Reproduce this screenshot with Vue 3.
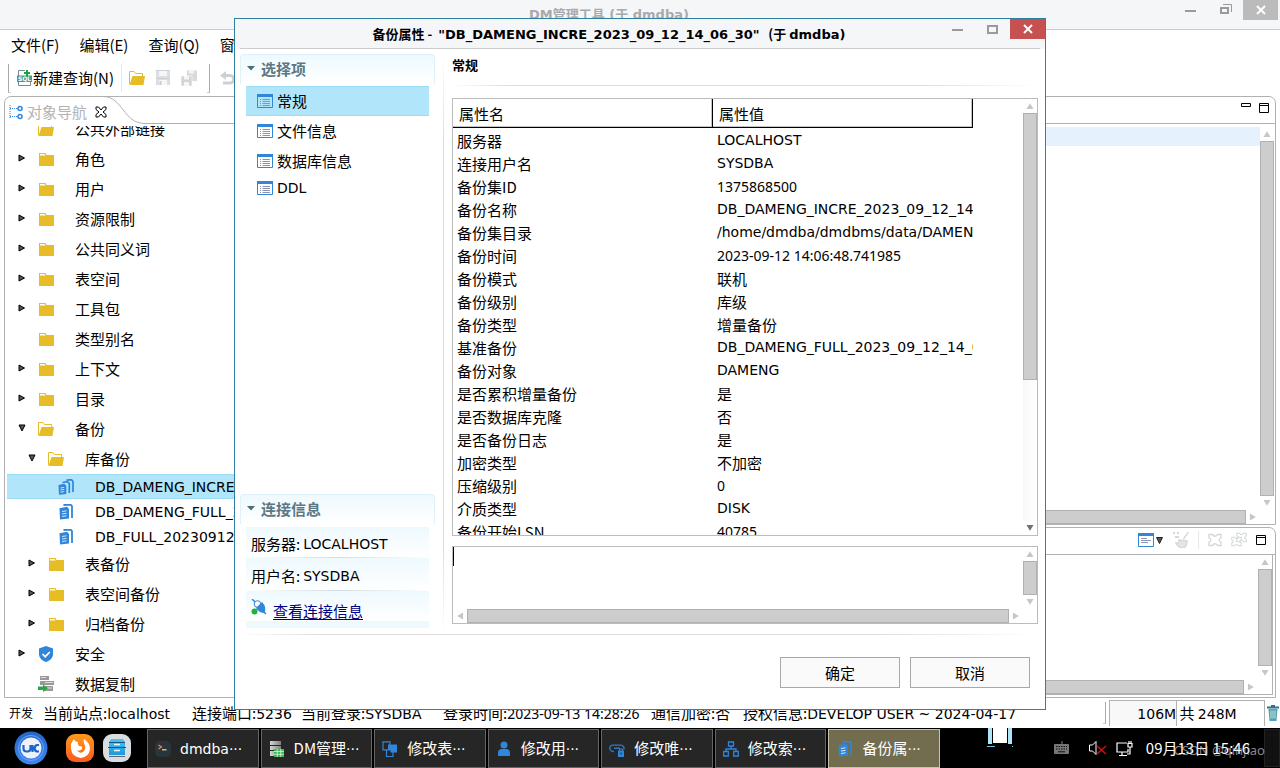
<script setup>
import { ref } from 'vue'

const menus = ['文件(F)', '编辑(E)', '查询(Q)', '窗口(W)']

const tree = [
  { label: '公共外部链接', icon: 'open', level: 0 },
  { label: '角色', icon: 'folder', level: 0, arrow: 'right' },
  { label: '用户', icon: 'folder', level: 0, arrow: 'right' },
  { label: '资源限制', icon: 'folder', level: 0, arrow: 'right' },
  { label: '公共同义词', icon: 'folder', level: 0, arrow: 'right' },
  { label: '表空间', icon: 'folder', level: 0, arrow: 'right' },
  { label: '工具包', icon: 'folder', level: 0, arrow: 'right' },
  { label: '类型别名', icon: 'folder', level: 0 },
  { label: '上下文', icon: 'folder', level: 0, arrow: 'right' },
  { label: '目录', icon: 'folder', level: 0, arrow: 'right' },
  { label: '备份', icon: 'open', level: 0, arrow: 'down' },
  { label: '库备份', icon: 'open', level: 1, arrow: 'down' },
  { label: 'DB_DAMENG_INCRE_2023_09_12_14_06_30', icon: 'incr', level: 2, selected: true },
  { label: 'DB_DAMENG_FULL_2023_09_12_14_02_11', icon: 'docs', level: 2 },
  { label: 'DB_FULL_20230912_140211', icon: 'docs', level: 2 },
  { label: '表备份', icon: 'folder', level: 1, arrow: 'right' },
  { label: '表空间备份', icon: 'folder', level: 1, arrow: 'right' },
  { label: '归档备份', icon: 'folder', level: 1, arrow: 'right' },
  { label: '安全', icon: 'shield', level: 0, arrow: 'right' },
  { label: '数据复制', icon: 'repl', level: 0 }
]

const sections = ['常规', '文件信息', '数据库信息', 'DDL']
const current = ref('常规')

const rows = [
  ['服务器', 'LOCALHOST', 'latin'],
  ['连接用户名', 'SYSDBA', 'latin'],
  ['备份集ID', '1375868500', 'num'],
  ['备份名称', 'DB_DAMENG_INCRE_2023_09_12_14_06_30', 'latin'],
  ['备份集目录', '/home/dmdba/dmdbms/data/DAMENG/bak', 'latin'],
  ['备份时间', '2023-09-12 14:06:48.741985', 'num'],
  ['备份模式', '联机'],
  ['备份级别', '库级'],
  ['备份类型', '增量备份'],
  ['基准备份', 'DB_DAMENG_FULL_2023_09_12_14_02_11', 'latin'],
  ['备份对象', 'DAMENG', 'latin'],
  ['是否累积增量备份', '是'],
  ['是否数据库克隆', '否'],
  ['是否备份日志', '是'],
  ['加密类型', '不加密'],
  ['压缩级别', '0', 'num'],
  ['介质类型', 'DISK', 'latin'],
  ['备份开始LSN', '40785', 'num']
]

const tasks = [
  { label: 'dmdba', icon: 'term', latin: true },
  { label: 'DM管理', icon: 'dm' },
  { label: '修改表', icon: 'tables' },
  { label: '修改用', icon: 'user' },
  { label: '修改唯', icon: 'link' },
  { label: '修改索', icon: 'index' },
  { label: '备份属', icon: 'docs', active: true }
]
</script>

<template>
  <div class="desktop">
    <svg class="sprite" aria-hidden="true">
      <defs>
        <linearGradient id="ff" x1="0" y1="0" x2="0" y2="1">
          <stop offset="0" stop-color="#ff9a1c" /><stop offset="1" stop-color="#fa5a20" />
        </linearGradient>
        <linearGradient id="uk" x1="0" y1="0" x2="0" y2="1">
          <stop offset="0" stop-color="#2467c9" /><stop offset="1" stop-color="#3f87f0" />
        </linearGradient>
        <linearGradient id="cab" x1="0" y1="0" x2="0" y2="1">
          <stop offset="0" stop-color="#4bc3f2" /><stop offset="1" stop-color="#1e97dc" />
        </linearGradient>
        <linearGradient id="srv" x1="0" y1="0" x2="1" y2="0">
          <stop offset="0" stop-color="#d5d5d5" /><stop offset="1" stop-color="#808080" />
        </linearGradient>
      </defs>
      <symbol id="i-folder" viewBox="0 0 16 16"><path d="M1 2h6.500l1 2H16v11H1z" fill="#e6bd26" /><path d="M2 3h4.500l1 1.500H2z" fill="#fff" /></symbol>
      <symbol id="i-open" viewBox="0 0 16 16"><path d="M.5 14V1.500h4.500l1.500 2h7V6" fill="none" stroke="#e6bd26" /><path d="M3.500 6H16l-1.500 9H.500z" fill="#e6bd26" /></symbol>
      <symbol id="i-docs" viewBox="0 0 16 16"><path d="M1.500 4.200 9 2.800 11 5v9.500l-9 1z" fill="#2f86da" /><path d="M5.500 1 12.500 .5 14 2v12" fill="none" stroke="#2f86da" stroke-width="1.800" /><path d="M4 7.500l4.500-.7M4 10l4.500-.7M4 12.500l4.500-.7" stroke="#fff" stroke-width=".8" /></symbol>
      <symbol id="i-incr" viewBox="0 0 16 16"><path d="M.5 6 6.500 4.800 8.300 7v8l-7.300.8z" fill="#2f86da" /><path d="M4.500 3.500 9.500 2.700 11.300 4.500V14M8.500 1.200 13.500 .7 15 2.500V13" fill="none" stroke="#2f86da" stroke-width="1.700" /><path d="M2.500 9l3.700-.6M2.500 11l3.700-.6M2.500 13.200l3.700-.6" stroke="#fff" stroke-width=".8" /></symbol>
      <symbol id="i-shield" viewBox="0 0 16 16"><path d="M8 0l7 2.500V8c0 4-3 6.700-7 8-4-1.300-7-4-7-8V2.500z" fill="#2f86da" /><path d="M4.500 8l2.700 2.700L11.800 6" fill="none" stroke="#fff" stroke-width="1.700" /></symbol>
      <symbol id="i-repl" viewBox="0 0 16 16"><path d="M2 0h9v4H2zM2 5h14v4H2zM6 10h9v5H6z" fill="#999" /><path d="M3 1.500h5M7 6.500h8M9 12h5" stroke="#ddd" /><path d="M0 10.500h5V8.500l5 3.700-5 3.800v-2H0z" fill="#28a745" /></symbol>
      <symbol id="i-list" viewBox="0 0 16 14"><path d="M.5 1h15v12.500H.5z" fill="none" stroke="#2f86da" /><path d="M0 0h16v3H0z" fill="#2f86da" /><path d="M3 5.500h1M3 7.500h1M3 9.500h1M3 11.500h1M5.500 5.500H13M5.500 7.500H13M5.500 9.500H13M5.500 11.500H13" stroke="#8a93b3" /></symbol>
      <symbol id="i-save" viewBox="0 0 16 16"><path d="M1 1h14v14H1z" fill="#dcdfe1" /><path d="M4 1h8v5H4zM4 10h8v5H4z" fill="#f5f6f7" /><path d="M5.500 11v4" stroke="#c8cccf" stroke-width="2" /><path d="M1 .5h14M1 8.500h14" stroke="#ccd0d3" /></symbol>
      <symbol id="i-term" viewBox="0 0 16 16"><rect width="16" height="16" rx="5" fill="#28353c" /><path d="M3.500 4l3 2-3 2" fill="none" stroke="#f08a45" stroke-width="1.200" /><path d="M7 8.800h4.500" stroke="#e7e08a" stroke-width="1.200" /></symbol>
      <symbol id="i-dm" viewBox="0 0 16 16"><path d="M1 0h11v4H1zM1 5h11v4H1zM1 10h5v5H1z" fill="url(#srv)" /><path d="M5 8h10v8H5z" fill="#3fb954" /><path d="M5 10.500h10M5 13.300h10M8.300 8v8M11.700 8v8" stroke="#d6f5dc" stroke-width=".8" /></symbol>
      <symbol id="i-tables" viewBox="0 0 16 16"><path d="M1 .8h7v8H1zM4.500 9v6.500H11V9" fill="none" stroke="#2f86da" stroke-width="1.200" /><path d="M6 3.500h9v8H8.500V9H6z" fill="#2f86da" /></symbol>
      <symbol id="i-user" viewBox="0 0 16 16"><circle cx="8" cy="4" r="3.500" fill="#2f86da" /><path d="M2 15v-3q0-4 4-4h4q4 0 4 4v3z" fill="#2f86da" /></symbol>
      <symbol id="i-link" viewBox="0 0 16 16"><path d="M5 10.500H4a3.200 3.200 0 0 1 0-6.400h8a3.200 3.200 0 0 1 2.700 4.500M5 7.300h6" fill="none" stroke="#2f78bd" stroke-width="1.400" /><path d="M9 9.500h6V16H9z" fill="#2f86da" /><path d="M10.500 9.500V8h3v1.500" fill="none" stroke="#2f86da" /><path d="M12 11.500v2" stroke="#222" /></symbol>
      <symbol id="i-index" viewBox="0 0 16 16"><path d="M5.500 1h5v4h-5zM.7 10.500h4.600V15H.7zM10.700 10.500h4.600V15h-4.600zM8 5v3M3 10.500V8h10v2.500" fill="none" stroke="#2f86da" stroke-width="1.300" /></symbol>
      <symbol id="i-x" viewBox="0 0 12 12"><path d="M1 1h2.500L6 4l2.500-3H11v2.500L8 6l3 2.500V11H8.500L6 8l-2.500 3H1V8.500L4 6 1 3.500z" fill="none" stroke="currentColor" /></symbol>
      <symbol id="i-clover" viewBox="0 0 14 14"><path d="M1 1.500h3.500Q7 5 9.500 1.500H13V5Q9 7 13 9v3.500H9.500Q7 9 4.500 12.500H1V9Q5 7 1 5z" fill="none" stroke="currentColor" stroke-width="1.300" /></symbol>
    </svg>

    <header class="titlebar">
      <h1>DM管理工具 (于 dmdba)</h1>
      <div class="winbtns">
        <button aria-label="最小化"><svg width="12" height="12"><path d="M0 6h11v2H0z" fill="#9a9a9e" /></svg></button>
        <button aria-label="还原"><svg width="12" height="12"><path d="M1 4h7v5H1z" fill="none" stroke="#9a9a9e" stroke-width="2" /><path d="M3 .5h8.500V8" fill="none" stroke="#9a9a9e" /></svg></button>
        <button class="close" aria-label="关闭"><svg width="10" height="10"><path d="M1 1l8 8M9 1L1 9" stroke="#fff" stroke-width="2" /></svg></button>
      </div>
    </header>

    <nav class="menubar"><button v-for="m in menus" :key="m">{{ m }}</button></nav>

    <div class="toolbar">
      <i class="grip"></i>
      <button class="newq">
        <svg width="15" height="16" viewBox="0 0 15 16"><path d="M1.500 6V.5H8M1.500 12v3.500h12V12" fill="none" stroke="#7a869a" /><path d="M0 5.500h15V12H0z" fill="#4a9c86" /><text x="7.500" y="11" text-anchor="middle" class="sql">SQL</text><path d="M7 3h6M10 0v6" stroke="#18a832" stroke-width="2" /></svg>新建查询(N)
      </button>
      <i class="thin"></i>
      <button aria-label="打开"><svg width="16" height="16"><use href="#i-open" /></svg></button>
      <button aria-label="保存"><svg width="16" height="16"><use href="#i-save" /></svg></button>
      <button aria-label="全部保存"><svg width="16" height="16"><path d="M6 .5h10V11H6z" fill="#d8dbdd" /><path d="M8 .5h5v3H8z" fill="#f5f6f7" /><path d="M0 6h11v10H0z" fill="#d2d5d8" stroke="#fff" stroke-width=".6" /><path d="M3 6h5v3.500H3zM3 12h5v4H3z" fill="#f5f6f7" /></svg></button>
      <i class="grip end"></i>
      <button aria-label="撤销"><svg width="16" height="16"><path d="M3 5.500h7a3.700 3.700 0 0 1 0 7.500H3" fill="none" stroke="#cdd1d4" stroke-width="3" /><path d="M0 5.500L6 1v9z" fill="#cdd1d4" /></svg></button>
    </div>

    <main class="work">
      <section class="nav">
        <div class="navtab">
          <div class="tabtext">
            <svg width="14" height="16"><path d="M1 1v13M1 4.500h8M1 12.500h8" stroke="#2f86da" stroke-dasharray="1 1" /><circle cx="11" cy="4.500" r="2" fill="none" stroke="#2f86da" stroke-width="1.500" /><circle cx="11" cy="12.500" r="2" fill="none" stroke="#2f86da" stroke-width="1.500" /></svg>
            <span>对象导航</span>
            <button aria-label="关闭视图"><svg width="12" height="12"><use href="#i-x" /></svg></button>
          </div>
          <svg class="curve" width="42" height="28"><path d="M0 .5C20 .5 20 27.500 42 27.500" fill="none" stroke="#b1b1b1" /></svg>
          <i class="rest"></i>
        </div>
        <div class="treewrap">
          <ul class="tree">
            <li v-for="n in tree" :key="n.label" :class="['l' + n.level, { sel: n.selected }]">
              <span class="arr"><svg v-if="n.arrow" width="8" height="8"><path :d="n.arrow === 'right' ? 'M1 1v6l5.500-3z' : 'M1 1h6L4 7z'" fill="#555" stroke="#000" /></svg></span>
              <svg width="16" height="16"><use :href="'#i-' + n.icon" /></svg>
              <span class="name">{{ n.label }}</span>
            </li>
          </ul>
        </div>
      </section>

      <div class="editors">
        <section class="pane top">
          <div class="panehead">
            <svg width="10" height="12"><path d="M.5 1.500h9v3h-9z" fill="none" stroke="#000" /></svg>
            <svg width="10" height="12"><path d="M.5 1.500h9v9h-9zM0 3.500h10" fill="none" stroke="#000" /></svg>
          </div>
          <div class="scrollgrid">
            <div class="editor"><div class="line"></div></div>
            <div class="sb v"><i class="a up"></i><b class="grow"></b><i class="a down"></i></div>
            <div class="sb h"><i class="a hidden"></i><b class="grow"></b><i class="a rt"></i></div>
          </div>
        </section>
        <section class="pane bottom">
          <div class="panehead tools">
            <svg width="26" height="14"><path d="M.5 1h15v12.500H.5z" fill="none" stroke="#2f86da" /><path d="M0 0h16v3H0z" fill="#2f86da" /><path d="M3 5.500h6M3 7.500h10M3 9.500h7" stroke="#8a93b3" /><path d="M18.500 4.500h6l-3 6z" fill="#555" stroke="#222" /></svg>
            <svg width="16" height="16"><path d="M15.500 0l-5 7M6 8l8 1q0 5-3 7-6 0-8-5 3 1 3-3z" stroke="#d5d8da" fill="#e3e5e6" stroke-width="1.500" /><path d="M0 1h2M4 1h2M2 5h4" stroke="#d5d8da" stroke-width="2" /></svg>
            <i class="thin"></i>
            <svg class="pale" width="14" height="14"><use href="#i-clover" /></svg>
            <svg class="pale" width="16" height="16"><use href="#i-clover" x="5" width="11" height="11" /><use href="#i-clover" y="4" width="11" height="11" /></svg>
            <svg width="10" height="12"><path d="M.5 1.500h9v9h-9zM0 3.500h10" fill="none" stroke="#000" /></svg>
          </div>
          <div class="scrollgrid framed">
            <div></div>
            <div class="sb v"><i class="a up"></i><b class="grow"></b><i class="a down"></i></div>
            <div class="sb h"><i class="a hidden"></i><b class="grow"></b><i class="a rt"></i></div>
          </div>
        </section>
      </div>
    </main>

    <footer class="status">
      <div class="info">
        <small>开发</small>
        <span>当前站点:<em>localhost</em></span>
        <span>连接端口:<em>5236</em></span>
        <span>当前登录:<em>SYSDBA</em></span>
        <span>登录时间:<span class="num">2023-09-13 14:28:26</span></span>
        <span>通信加密:否</span>
        <span>授权信息:<em>DEVELOP USER ~ 2024-04-17</em></span>
      </div>
      <i class="grip end"></i>
      <div class="heap"><span><em>106M</em> 共 <em>248M</em></span></div>
      <button class="trash" aria-label="回收"><svg width="12" height="16"><path d="M1.500 4h9l-1 12h-7z" fill="#4f9fc0" /><path d="M0 2.500h12M4 1h4" stroke="#2a7296" stroke-width="2" /><path d="M4 5.500v8M6 5.500v8M8 5.500v8" stroke="#c8e8b8" /></svg></button>
    </footer>

    <div class="taskbar">
      <button class="launch" aria-label="开始菜单">
        <svg width="34" height="34"><circle cx="17" cy="17" r="16.500" fill="url(#uk)" /><circle cx="17" cy="17" r="12.500" fill="none" stroke="#68a5ff" /><circle cx="17" cy="17" r="10.500" fill="#eef2f8" /><path d="M9.500 14v3.500q0 3 3 3h1q3 0 3-3V14M18.500 14v7M25 14h-1.500q-2.500 0-3 3.500.5 3 3 3H25" fill="none" stroke="#1d65c8" stroke-width="2.200" /></svg>
      </button>
      <button class="launch" aria-label="Firefox">
        <svg width="28" height="28"><rect width="28" height="28" rx="9" fill="url(#ff)" /><path d="M5 10q2-4 3-5 1 3 4 3-1 2 1 4 4 0 3 3-3 3-5 1 2 4 6 2 4-3 1-9-1-2 0-4 6 4 6 10-1 8-9 9-9-1-10-9z" fill="#fff" /></svg>
      </button>
      <button class="launch" aria-label="文件管理器">
        <svg width="28" height="28"><rect width="28" height="28" rx="9" fill="#d8dde2" /><path d="M8 5h12l2 3v13H6V8z" fill="url(#cab)" /><path d="M6 8.500h16M5 13.500h18" stroke="#14587f" /><path d="M11 10.500h6M11 16.500h6" stroke="#e4f7ff" stroke-width="1.500" /><path d="M6 22.500h16" stroke="#56697a" /></svg>
      </button>
      <div class="tasks">
        <button v-for="t in tasks" :key="t.label" :class="{ active: t.active, latin: t.latin }">
          <svg width="16" height="16"><use :href="'#i-' + t.icon" /></svg><span>{{ t.label }}<span class="dots">···</span></span>
        </button>
      </div>
      <svg class="pager" width="26" height="20"><path d="M1 0h4v16H1zM21 0h4v16h-4z" fill="#aee4f8" /><path d="M6 0h14v15H6z" fill="#fff" /><path d="M0 18.500h8M25 18.500h1" stroke="#63c4e8" /></svg>
      <div class="tray">
        <svg width="16" height="14"><path d="M8 0v3" stroke="#888" /><rect y="3" width="15" height="10" rx="1" fill="#777" /><path d="M2 5.500h11M2 8h11" stroke="#111" stroke-dasharray="1.500 1" /><path d="M4 10.800h7" stroke="#111" /></svg>
        <svg width="18" height="16"><path d="M.5 5h3L7 1.500v13L3.500 11h-3z" fill="none" stroke="#fff" /><path d="M8 6l9 8M17 6l-9 8" stroke="#d01010" stroke-width="1.500" /></svg>
        <svg width="18" height="16"><path d="M11 3H1v9h11V9M6 12v3M3 15.500h8M12 3.500h4v3.500h-4zM13 3.500V1M15 3.500V1M14 7v7h-3" fill="none" stroke="#fff" stroke-width="1.200" /></svg>
        <time>09月13日 15:46<span class="mark">CSDN @qinjiao</span></time>
      </div>
      <button class="showdesk" aria-label="显示桌面"></button>
    </div>

    <div class="dialog" role="dialog" aria-labelledby="dlg-title">
      <header class="dtitle">
        <h2 id="dlg-title">备份属性 -&nbsp; <em>"DB_DAMENG_INCRE_2023_09_12_14_06_30"</em>&nbsp;&nbsp; (于 <em>dmdba)</em></h2>
        <div class="winbtns">
          <button aria-label="最小化"><svg width="12" height="12"><path d="M0 6h11v2H0z" fill="#9a9a9e" /></svg></button>
          <button aria-label="最大化"><svg width="12" height="12"><path d="M1 3h9v7H1z" fill="none" stroke="#9a9a9e" stroke-width="2" /></svg></button>
          <button class="close red" aria-label="关闭"><svg width="10" height="10"><path d="M1 1l8 8M9 1L1 9" stroke="#fff" stroke-width="2" /></svg></button>
        </div>
      </header>
      <div class="dbody">
        <aside>
          <h3><svg width="8" height="5"><path d="M0 0h8L4 4.500z" fill="#4d6c7a" /></svg>选择项</h3>
          <ul class="opts">
            <li v-for="s in sections" :key="s">
              <button :class="{ on: s === current, latin: s === 'DDL' }" @click="current = s"><svg width="16" height="14"><use href="#i-list" /></svg>{{ s }}</button>
            </li>
          </ul>
          <h3 class="second"><svg width="8" height="5"><path d="M0 0h8L4 4.500z" fill="#4d6c7a" /></svg>连接信息</h3>
          <div class="conn">
            <p>服务器: <em>LOCALHOST</em></p>
            <p>用户名: <em>SYSDBA</em></p>
            <p class="lnk"><svg width="16" height="16"><path d="M1 0l4 4M11 11l4 4" stroke="#2f86da" stroke-width="1.500" /><circle cx="6.500" cy="5" r="3.300" fill="#fff" stroke="#2f86da" /><path d="M5 9l6-6q5 5 2.500 11Q8 14 5 9z" fill="#2f86da" /><circle cx="3.500" cy="12.500" r="3" fill="#25b03c" /></svg><a href="#">查看连接信息</a></p>
          </div>
        </aside>
        <i class="vline"></i>
        <div class="content">
          <h4>{{ current }}</h4>
          <i class="hline"></i>
          <div class="tablebox">
            <div class="tscroll">
              <table>
                <colgroup><col class="c1" /><col class="c2" /></colgroup>
                <thead><tr><th scope="col">属性名</th><th scope="col">属性值</th></tr></thead>
                <tbody>
                  <tr v-for="r in rows" :key="r[0]"><td>{{ r[0] }}</td><td :class="r[2]">{{ r[1] }}</td></tr>
                </tbody>
              </table>
            </div>
            <div class="sb v"><i class="a up"></i><b class="tall"></b><span class="track"></span><i class="a down dark"></i></div>
          </div>
          <div class="desc">
            <div class="ta"><textarea aria-label="描述" readonly></textarea><i class="caret"></i></div>
            <div class="sb v"><i class="a up"></i><b class="grow"></b><i class="a down"></i></div>
            <div class="sb h"><i class="a left"></i><b class="grow"></b><i class="a rt"></i></div>
          </div>
        </div>
      </div>
      <i class="hline both"></i>
      <div class="actions"><button>确定</button><button>取消</button></div>
    </div>
  </div>
</template>

<style>
body { overflow: hidden; background: #fff; }
</style>

<style scoped>
.desktop { position: relative; height: 100vh; display: flex; flex-direction: column; overflow: hidden; background: #fff; color: #000; font: 15px/22px "Noto Sans CJK SC", sans-serif; }
.desktop *, .desktop *::before { box-sizing: border-box; }
.sprite { position: absolute; width: 0; height: 0; }
button { font: inherit; color: inherit; border: 0; padding: 0; background: none; display: flex; align-items: center; white-space: nowrap; }
svg, i { display: block; flex: none; }
em, .latin { font-style: normal; font-family: "DejaVu Sans", "Noto Sans CJK SC", sans-serif; font-size: 14px; }
.num { font-family: "Noto Sans", "Noto Sans CJK SC", sans-serif; font-size: 14px; }
h1, h2, h3, h4, ul, p { margin: 0; padding: 0; list-style: none; }

.titlebar { position: relative; height: 30px; flex: none; background: #f5f6f8; border-bottom: 1px solid #ccc; }
.titlebar h1 { font: bold 13px/29px "DejaVu Sans", "Noto Sans CJK SC", sans-serif; color: #a9a9ad; text-align: center; padding-right: 62px; }
.winbtns { position: absolute; top: 0; right: 0; display: flex; height: 20px; }
.winbtns button { width: 35px; justify-content: center; }
.winbtns .close { background: #bbb; }
.titlebar .winbtns { right: 2px; }
.winbtns .red { background: #c75050; }

.menubar { height: 30px; flex: none; display: flex; gap: 20px; padding-left: 11px; }
.toolbar { height: 36px; flex: none; display: flex; align-items: center; gap: 10px; padding-left: 8px; }
.toolbar .newq { gap: 1px; margin-left: -4px; }
.sql { font: bold 6px "DejaVu Sans", sans-serif; fill: #fff; }
.grip { width: 3px; height: 29px; border-left: 1px solid #aaa; border-bottom: 1px solid #ccc; }
.grip.end { border-left: 0; border-right: 1px solid #aaa; }
.thin { width: 1px; height: 28px; margin: 0 -3px; background: #e8e8e8; }

.work { flex: 1; min-height: 0; display: flex; gap: 4px; padding: 0 4px; }
.nav { flex: 0 1 320px; border: 1px solid #b1b1b1; border-radius: 7px 7px 0 0; display: flex; flex-direction: column; min-width: 0; }
.navtab { display: flex; height: 27px; margin-top: -1px; flex: none; }
.navtab .tabtext { display: flex; align-items: center; gap: 4px; padding: 4px 0 0 4px; width: 98px; color: #b3b3b3; flex: none; white-space: nowrap; }
.tabtext button { color: #000; margin-left: 4px; }
.rest { flex: 1; border: solid #b1b1b1; border-width: 1px 0; height: 28px; }
.treewrap { flex: 1; min-height: 0; overflow: hidden; margin: 3px 0 0 2px; }
.tree { margin-top: -12px; }
.tree li { height: 30px; display: flex; align-items: center; white-space: nowrap; padding-left: 11px; }
.tree .l1 { padding-left: 21px; }
.tree .l2 { padding-left: 31px; height: 25px; font-family: "DejaVu Sans", sans-serif; font-size: 14px; }
.tree .sel { background: #b0e5fa; border: solid #9adcf5; border-width: 1px 0; }
.arr { width: 20px; height: 10px; flex: none; }
.name { margin-left: 21px; }

.editors { flex: 1; display: flex; flex-direction: column; gap: 2px; min-width: 0; }
.pane { border: 1px solid #b1b1b1; border-radius: 0 7px 0 0; display: flex; flex-direction: column; min-height: 0; }
.top { flex: 0 1 429px; }
.bottom { flex: 1; }
.panehead { height: 27px; flex: none; display: flex; justify-content: flex-end; align-items: flex-start; padding: 5px 6px 0 0; gap: 8px; border-bottom: 1px solid #b1b1b1; }
.tools { align-items: center; padding: 0 9px 3px 0; gap: 9px; }
.tools .thin { margin: 0; height: 18px; }
.pale { color: #d3d6d8; }
.scrollgrid { flex: 1; min-height: 0; display: grid; grid-template-columns: 1fr 14px; grid-template-rows: 1fr 14px; padding: 3px 1px 0 0; }
.framed { border: solid #b1b1b1; border-width: 0 1px 1px 0; margin: 0 2px 2px 0; padding: 0; }
.line { height: 19px; background: #e6f1fe; }
.sb { display: flex; background: #fff; min-width: 0; min-height: 0; }
.v { flex-direction: column; width: 14px; }
.sb b { background: #cdcdcd; border: 1px solid #b1b1b1; }
.grow { flex: 1; }
.a { width: 14px; height: 14px; background: #c6c6c6; }
.hidden { visibility: hidden; }
.up { clip-path: polygon(50% 30%, 75% 72%, 25% 72%); }
.down { clip-path: polygon(25% 28%, 75% 28%, 50% 70%); }
.left { clip-path: polygon(30% 50%, 72% 25%, 72% 75%); }
.rt { clip-path: polygon(28% 25%, 70% 50%, 28% 75%); }
.dark { background: #707070; }

.status { height: 30px; flex: none; display: flex; align-items: center; white-space: nowrap; }
.info { flex: 1; display: grid; grid-template-columns: 34px 149px 109px 142px 208px 92px 1fr; padding-left: 9px; align-items: center; }
.info small { font-size: 12px; }
.status .grip { height: 22px; margin-right: 3px; }
.heap { width: 156px; height: 26px; border: 1px solid #b1b1b1; border-bottom: 0; display: flex; align-items: center; justify-content: center; background: linear-gradient(90deg, #f8f8f8 66px, #b1b1b1 66px, #b1b1b1 67px, #fff 67px); }
.trash { width: 15px; justify-content: center; }

.taskbar { height: 40px; flex: none; background: #000; color: #fff; display: flex; align-items: center; padding-left: 14px; }
.launch { margin-right: 9px; }
.launch:first-child { margin-right: 18px; }
.tasks { flex: 0 1 793px; display: grid; grid-template-columns: repeat(7, 1fr); gap: 2px; margin: 1px 47px 0 7px; height: 39px; }
.tasks button { background: #262626; border: 1px solid #666; gap: 9px; padding-left: 7px; min-width: 0; overflow: hidden; }
.dots { font-family: "DejaVu Sans", sans-serif; font-size: 14px; }
.tasks .active { background: #736d50; border-color: #c9c4a9; padding-left: 8px; }
.pager { align-self: flex-start; }
.tray { flex: 1; display: flex; align-items: center; justify-content: flex-end; white-space: nowrap; gap: 9px; padding-right: 14px; }
.tray svg:first-child { margin-right: 10px; }
.tray time { position: relative; margin-left: 3px; }
.mark { position: absolute; left: 28px; top: 3px; font: 13px/20px "Noto Sans", sans-serif; color: rgba(200, 200, 200, .7); }
.showdesk { width: 16px; height: 38px; background: #111; border: 1px solid #222; }

.dialog { position: absolute; top: 18px; left: calc(50% - 406px); width: 812px; background: #fff; border: 1px solid #2f7f9f; }
.dtitle { position: relative; height: 30px; background: linear-gradient(#ccc, #ccc) 5px 100% / calc(100% - 10px) 1px no-repeat #f5f6f8; }
.dtitle h2 { font-size: 13px; line-height: 30px; text-align: center; padding-right: 62px; white-space: nowrap; }
.dtitle em { font-size: 13px; }
.dbody { display: flex; padding: 5px 7px 0 5px; }
aside { width: 195px; flex: none; display: flex; flex-direction: column; height: 580px; }
h3 { height: 30px; border: 1px solid #dff2fa; border-bottom: 0; border-radius: 4px 4px 0 0; background: linear-gradient(#eef9fe, #fff); display: flex; align-items: center; gap: 6px; padding: 0 0 2px 6px; font-size: 15px; font-weight: bold; color: #5c7884; }
.opts { margin: 2px 6px 0; }
.opts button { width: 100%; height: 30px; border: 1px solid transparent; border-width: 1px 0; gap: 4px; padding-left: 11px; }
.opts .latin { height: 24px; }
.opts .on { background: #b0e5fa; border-color: #9adcf5; }
h3.second { margin-top: auto; }
.conn { margin: 3px 6px 6px; }
.conn p { height: 31px; display: flex; align-items: center; gap: 3px; padding: 3px 0 0 5px; background: linear-gradient(90deg, #fff, #d3dde2, #fff) 0 100% / 100% 1px no-repeat, linear-gradient(#eef9fe, #fff); }
.conn p + p { height: 33px; }
.conn .lnk { height: 37px; gap: 6px; background: linear-gradient(#eef9fe, #fff 30px, #eef9fe 30px, #eef9fe); }
.lnk svg { margin-bottom: 8px; }
.lnk a { color: #000080; text-decoration: underline; text-underline-offset: 2px; }
.vline { width: 1px; margin: 0 8px; background: linear-gradient(#fff, #ddd 15%, #ddd 85%, #fff); }
.content { flex: 1; min-width: 0; }
h4 { font-size: 13px; line-height: 22px; height: 31px; }
.hline { height: 1px; background: linear-gradient(90deg, #fff, #ddd 10%, #ddd 80%, #fff); }
.both { margin: 0 7px 0 5px; }
.tablebox { margin-top: 12px; height: 438px; border: 1px solid #bcbcbc; display: flex; }
.tscroll { flex: 1; overflow: hidden; }
table { border-collapse: separate; border-spacing: 0; table-layout: fixed; width: 520px; }
.c1, .c2 { width: 260px; }
th { height: 29px; text-align: left; font-weight: 400; padding: 2px 6px 0; border-bottom: 1px solid #000; border-right: 1px solid #000; box-shadow: inset -1px -1px #c4c4c4; }
tbody::before { content: ""; display: block; height: 2px; }
td { height: 23px; line-height: 22px; padding: 0 0 1px 4px; overflow: hidden; white-space: nowrap; }
td.latin { padding-bottom: 3px; line-height: 20px; }
.tall { height: 267px; }
.track { flex: 1; background: linear-gradient(90deg, #f8f8f8, #fff); }
.desc { margin-top: 10px; height: 78px; border: 1px solid #bcbcbc; display: grid; grid-template-columns: 1fr 14px; grid-template-rows: 1fr 14px; }
.ta { position: relative; }
textarea { display: block; width: 100%; height: 100%; border: 0; outline: 0; resize: none; padding: 0; background: none; font: inherit; }
.caret { position: absolute; left: 0; top: 0; width: 1px; height: 19px; background: #000; }
.actions { display: flex; justify-content: flex-end; gap: 10px; padding: 22px 15px 21px; }
.actions button { width: 120px; height: 31px; border: 1px solid #a8a8a8; background: #fafafa; justify-content: center; }
</style>
